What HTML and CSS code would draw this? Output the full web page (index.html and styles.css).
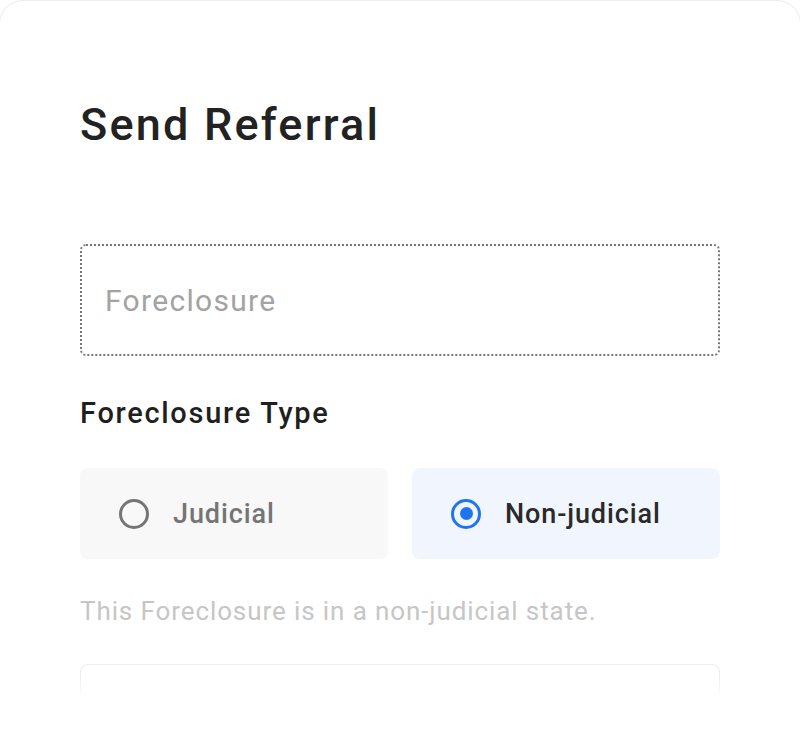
FILE: index.html
```html
<!DOCTYPE html>
<html lang="en">
<head>
<meta charset="utf-8">
<title>Send Referral</title>
<link rel="stylesheet" href="styles.css">
</head>
<body>
<div class="card">
  <h1 class="title">Send Referral</h1>
  <div class="input"><span class="placeholder">Foreclosure</span></div>
  <div class="label">Foreclosure Type</div>
  <div class="options">
    <div class="option">
      <span class="radio"></span>
      <span class="opt-text">Judicial</span>
    </div>
    <div class="option selected">
      <span class="radio checked"></span>
      <span class="opt-text">Non-judicial</span>
    </div>
  </div>
  <p class="help">This Foreclosure is in a non-judicial state.</p>
  <div class="next-box"></div>
</div>
</body>
</html>
```
FILE: styles.css
```css
html, body {
  margin: 0;
  padding: 0;
  background: #ffffff;
  overflow: hidden;
}
body {
  font-family: Roboto, "Liberation Sans", sans-serif;
}
.card {
  box-sizing: border-box;
  width: 802px;
  height: 740px;
  margin-left: -1px;
  border: 1px solid #ededed;
  border-bottom: none;
  border-radius: 24px 24px 0 0;
  background: #ffffff;
  padding: 98px 80px 0 80px;
  overflow: hidden;
}
.title {
  margin: 0;
  font-size: 45px;
  line-height: 52px;
  font-weight: 500;
  letter-spacing: 2.2px;
  color: #222222;
}
.input {
  box-sizing: border-box;
  margin-top: 93px;
  height: 112px;
  border: 2px dotted #777777;
  border-radius: 6px;
  display: flex;
  align-items: center;
  padding-left: 23px;
}
.placeholder {
  font-size: 30px;
  letter-spacing: 1.3px;
  color: #a3a3a3;
}
.label {
  margin-top: 39px;
  font-size: 29px;
  line-height: 36px;
  font-weight: 500;
  letter-spacing: 1.7px;
  color: #1f1f1f;
}
.options {
  margin-top: 37px;
  display: grid;
  grid-template-columns: 1fr 1fr;
  gap: 24px;
}
.option {
  height: 91px;
  border-radius: 8px;
  background: #f8f8f8;
  display: flex;
  align-items: center;
  padding-left: 39px;
  gap: 24px;
}
.option.selected {
  background: #f1f6fe;
}
.radio {
  box-sizing: border-box;
  width: 30px;
  height: 30px;
  border-radius: 50%;
  border: 3px solid #757575;
  display: flex;
  align-items: center;
  justify-content: center;
}
.radio.checked {
  border-color: #1f74f2;
}
.radio.checked::after {
  content: "";
  width: 13px;
  height: 13px;
  border-radius: 50%;
  background: #1f74f2;
}
.opt-text {
  font-size: 27px;
  font-weight: 500;
  letter-spacing: 0.9px;
  color: #757575;
}
.option.selected .opt-text {
  color: #2a2a2a;
}
.help {
  margin: 36px 0 0 0;
  font-size: 26px;
  line-height: 32px;
  letter-spacing: 0.9px;
  color: #c6c6c6;
}
.next-box {
  margin-top: 37px;
  height: 60px;
  border: 1px solid #ededed;
  border-bottom: none;
  border-radius: 8px 8px 0 0;
  -webkit-mask-image: linear-gradient(#000 20%, transparent 60%);
  mask-image: linear-gradient(#000 20%, transparent 60%);
}
```
